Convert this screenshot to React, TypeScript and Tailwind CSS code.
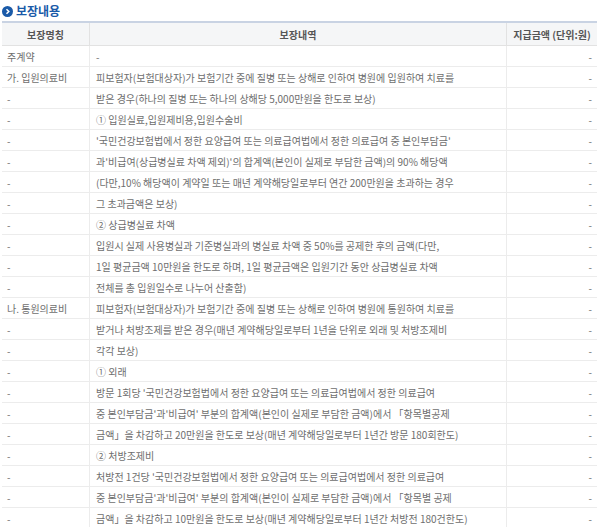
const rows: [string, string][] = [
  ["주계약", "-"],
  ["가. 입원의료비", "피보험자(보험대상자)가 보험기간 중에 질병 또는 상해로 인하여 병원에 입원하여 치료를"],
  ["-", "받은 경우(하나의 질병 또는 하나의 상해당 5,000만원을 한도로 보상)"],
  ["-", "① 입원실료,입원제비용,입원수술비"],
  ["-", "'국민건강보험법에서 정한 요양급여 또는 의료급여법에서 정한 의료급여 중 본인부담금'"],
  ["-", "과'비급여(상급병실료 차액 제외)'의 합계액(본인이 실제로 부담한 금액)의 90% 해당액"],
  ["-", "(다만,10% 해당액이 계약일 또는 매년 계약해당일로부터 연간 200만원을 초과하는 경우"],
  ["-", "그 초과금액은 보상)"],
  ["-", "② 상급병실료 차액"],
  ["-", "입원시 실제 사용병실과 기준병실과의 병실료 차액 중 50%를 공제한 후의 금액(다만,"],
  ["-", "1일 평균금액 10만원을 한도로 하며, 1일 평균금액은 입원기간 동안 상급병실료 차액"],
  ["-", "전체를 총 입원일수로 나누어 산출함)"],
  ["나. 통원의료비", "피보험자(보험대상자)가 보험기간 중에 질병 또는 상해로 인하여 병원에 통원하여 치료를"],
  ["-", "받거나 처방조제를 받은 경우(매년 계약해당일로부터 1년을 단위로 외래 및 처방조제비"],
  ["-", "각각 보상)"],
  ["-", "① 외래"],
  ["-", "방문 1회당 '국민건강보험법에서 정한 요양급여 또는 의료급여법에서 정한 의료급여"],
  ["-", "중 본인부담금'과'비급여' 부분의 합계액(본인이 실제로 부담한 금액)에서 「항목별공제"],
  ["-", "금액」을 차감하고 20만원을 한도로 보상(매년 계약해당일로부터 1년간 방문 180회한도)"],
  ["-", "② 처방조제비"],
  ["-", "처방전 1건당 '국민건강보험법에서 정한 요양급여 또는 의료급여법에서 정한 의료급여"],
  ["-", "중 본인부담금'과'비급여' 부분의 합계액(본인이 실제로 부담한 금액)에서 「항목별 공제"],
  ["-", "금액」을 차감하고 10만원을 한도로 보상(매년 계약해당일로부터 1년간 처방전 180건한도)"],
];

export default function App() {
  return (
    <div className="w-[600px] h-[527px] overflow-hidden bg-white text-[10px] text-[#6e6e6e]" style={{ fontFamily: '"Noto Sans CJK KR", "Noto Sans", sans-serif' }}>
      <div className="flex items-center gap-[3px] h-[21px] pl-[2px] pt-[1px]">
        <span className="w-[11px] h-[11px] rounded-full bg-[#1a5aa8] flex items-center justify-center">
          <svg width="7" height="7" viewBox="0 0 7 7"><path d="M2.5 1.2 L4.8 3.5 L2.5 5.8" stroke="white" strokeWidth="1.5" fill="none" /></svg>
        </span>
        <span className="text-[12px] font-bold text-[#1a5aa8] leading-none">보장내용</span>
      </div>
      <div className="ml-[2px] mr-[3px] border-t-2 border-[#c9d3e3]">
        <div className="grid grid-cols-[88px_417px_1fr] h-[23px] bg-[#f5f6f7] border-b border-[#e2e2e2] text-[#555] font-semibold text-[10px]">
          <div className="flex items-center justify-center border-r border-[#e2e2e2]">보장명칭</div>
          <div className="flex items-center justify-center border-r border-[#e2e2e2]">보장내역</div>
          <div className="flex items-center justify-center">지급금액 (단위:원)</div>
        </div>
        {rows.map(([a, b], i) => (
          <div key={i} className="grid grid-cols-[88px_417px_1fr] h-[21px] border-b border-[#ececec]">
            <div className="flex items-center pl-[5px] border-r border-[#ececec] whitespace-nowrap">{a}</div>
            <div className="flex items-center pl-[6px] border-r border-[#ececec] whitespace-nowrap overflow-hidden">{b}</div>
            <div className="flex items-center justify-end pr-[5px]">-</div>
          </div>
        ))}
      </div>
    </div>
  );
}
